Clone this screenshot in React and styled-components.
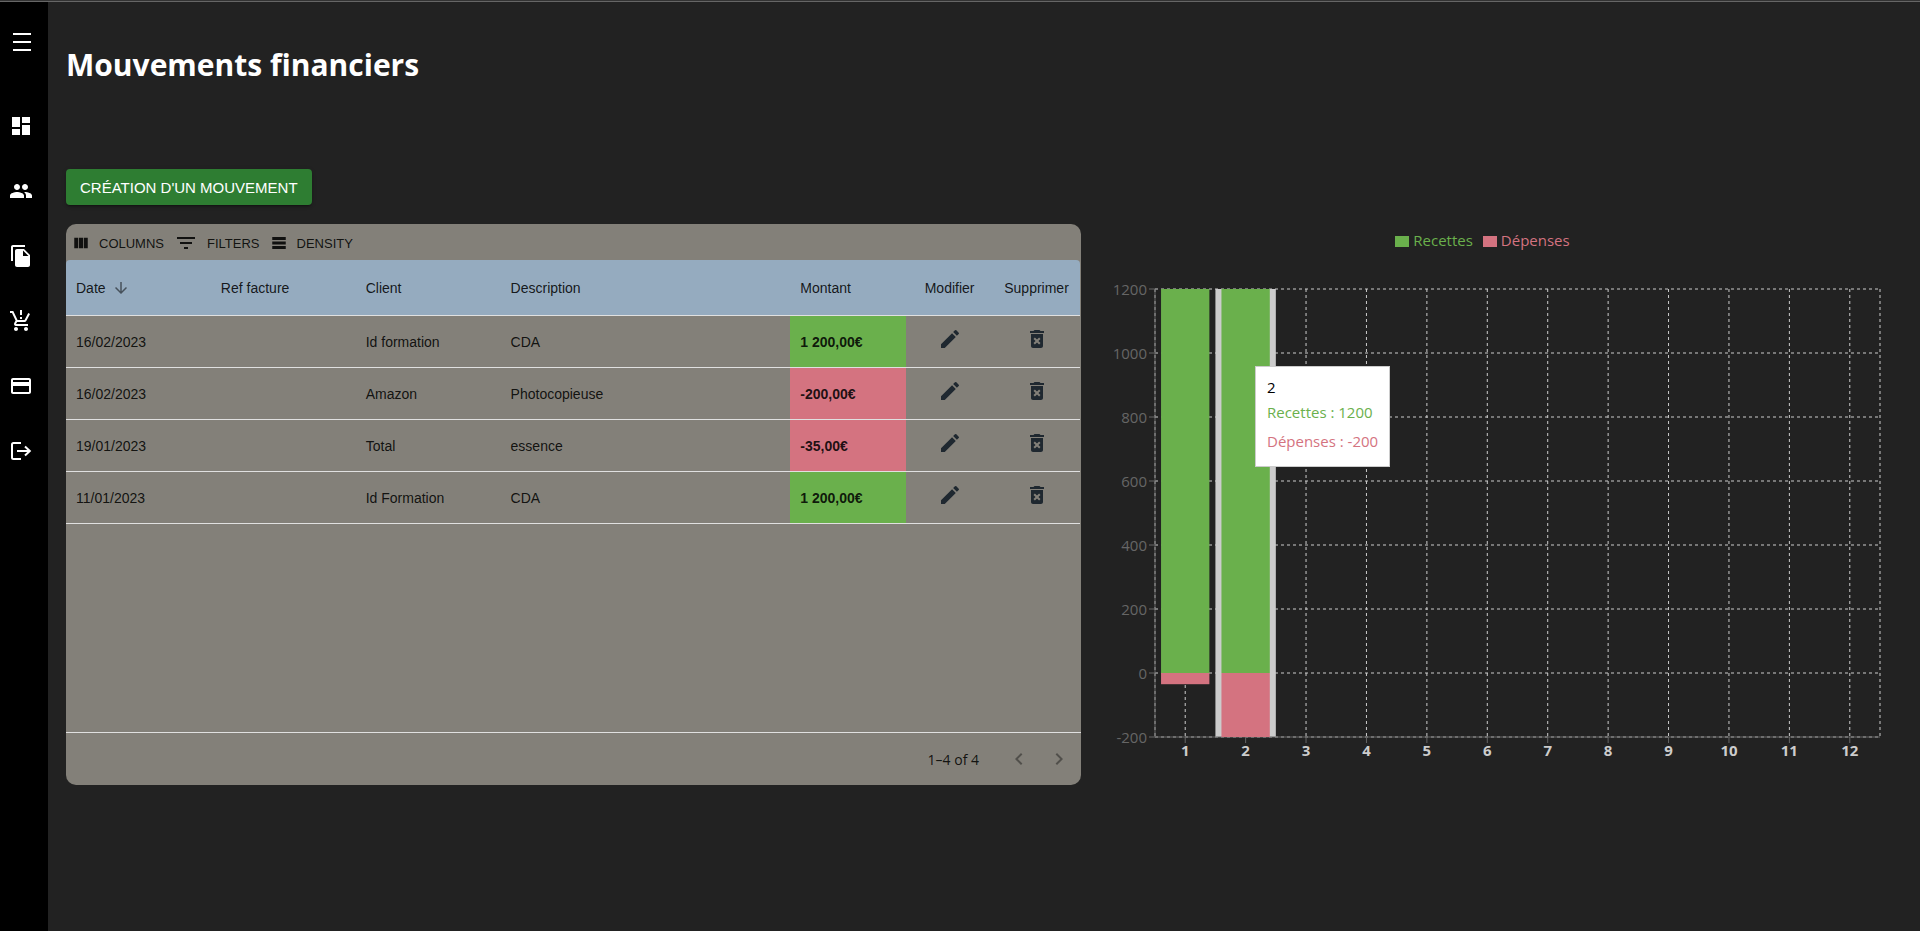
import React from "react";
import styled, { createGlobalStyle } from "styled-components";
import {
  MdDashboard,
  MdPeople,
  MdFileCopy,
  MdProductionQuantityLimits,
  MdPayment,
  MdEdit,
  MdDeleteForever,
  MdArrowDownward,
  MdKeyboardArrowLeft,
  MdKeyboardArrowRight,
  MdFilterList,
} from "react-icons/md";

const GREEN = "#6ab04c";
const RED = "#d47380";
const SANS = `"Liberation Sans", Arial, sans-serif`;
const HUMANIST = `"Open Sans", "Noto Sans", sans-serif`;

const GlobalStyle = createGlobalStyle`
  *, *::before, *::after { box-sizing: border-box; }
  body { margin: 0; background: #222; font-family: ${HUMANIST}; }
  button { font-family: inherit; border: 0; background: none; padding: 0; cursor: pointer; }
`;

const TopRule = styled.div`
  height: 2px;
  background: #333;
  border-bottom: 1px solid #666;
`;

const Page = styled.div`
  display: flex;
  min-height: calc(100vh - 2px);
`;

const Sidebar = styled.nav`
  flex: none;
  width: 48px;
  padding: 20px 0 0 9px;
  background: #000;
  color: #fff;
`;

const MenuButton = styled.button`
  display: block;
  height: 40px;
  color: inherit;
  svg { display: block; margin-left: 1px; }
`;

const NavList = styled.ul`
  display: flex;
  flex-direction: column;
  gap: 1px;
  list-style: none;
  margin: 32px 0 0;
  padding: 0;
`;

const NavLink = styled.a`
  display: flex;
  align-items: center;
  height: 64px;
  color: #fff;
`;

const Main = styled.main`
  flex: 1;
  min-width: 0;
  padding: 41px 40px 40px 18px;
`;

const Title = styled.h1`
  margin: 0 0 82px;
  font-size: 30px;
  line-height: 44px;
  font-weight: 700;
  color: #fff;
`;

const CreateButton = styled.button`
  display: block;
  height: 36px;
  padding: 0 14px;
  border-radius: 4px;
  background: #2e7d32;
  color: #fff;
  font-family: ${SANS};
  font-size: 15px;
  box-shadow: 0 3px 1px -2px rgba(0, 0, 0, 0.2), 0 2px 2px rgba(0, 0, 0, 0.14), 0 1px 5px rgba(0, 0, 0, 0.12);
`;

const Panels = styled.div`
  display: grid;
  grid-template-columns: 1015fr 795fr;
  align-items: start;
  gap: 4px;
  margin-top: 19px;
`;

const Card = styled.section`
  display: flex;
  flex-direction: column;
  min-height: 561px;
  border-radius: 10px;
  background: #838079;
  color: rgba(0, 0, 0, 0.87);
  font-family: ${SANS};
  font-size: 14px;
`;

const Toolbar = styled.div`
  display: flex;
  align-items: center;
  gap: 10px;
  height: 36px;
  padding: 2px 6px 0;
`;

const ToolButton = styled.button`
  display: flex;
  align-items: center;
  gap: 9px;
  font-size: 13px;
  color: rgba(0, 0, 0, 0.87);
`;

const Table = styled.table`
  width: 100%;
  padding-right: 1px;
  table-layout: fixed;
  border-collapse: separate;
  border-spacing: 0;
`;

const Col = styled.col`
  width: ${(p) => p.$width};
`;

const HeadCell = styled.th`
  height: 56px;
  padding: 0 10px;
  border-bottom: 1px solid #e0e0e0;
  background: #95abbf;
  font-weight: 400;
  text-align: ${(p) => (p.$center ? "center" : "left")};
  &:first-child { border-top-left-radius: 4px; }
  &:last-child { border-top-right-radius: 4px; }
`;

const SortLabel = styled.span`
  display: flex;
  align-items: center;
  gap: 6px;
  svg { opacity: 0.6; }
`;

const Cell = styled.td`
  height: 52px;
  padding: 0 10px;
  border-bottom: 1px solid #e0e0e0;
`;

const AmountCell = styled(Cell)`
  background: ${(p) => (p.$negative ? RED : GREEN)};
  font-weight: 700;
`;

const ActionCell = styled(Cell)`
  padding: 0 0 6px;
`;

const IconButton = styled.button`
  display: block;
  margin: 0 auto;
  color: #1f2830;
  svg { display: block; }
`;

const Footer = styled.footer`
  display: flex;
  align-items: center;
  justify-content: flex-end;
  gap: 16px;
  height: 53px;
  margin-top: auto;
  padding-right: 10px;
  border-top: 1px solid #e0e0e0;
  font-family: ${HUMANIST};
`;

const PageButton = styled.button`
  color: rgba(0, 0, 0, 0.38);
  svg { display: block; }
`;

const PageNav = styled.div`
  display: flex;
  gap: 16px;
  padding-left: 12px;
`;

const ChartPanel = styled.figure`
  position: relative;
  margin: 0;
  font-size: 15px;
`;

const Legend = styled.figcaption`
  display: flex;
  justify-content: center;
  gap: 10px;
  height: 65px;
  padding-top: 4px;
  line-height: 24px;
`;

const LegendItem = styled.span`
  display: flex;
  align-items: center;
  height: 24px;
  gap: 4px;
  color: ${(p) => p.$color};
  &::before {
    content: "";
    width: 14px;
    height: 11px;
    margin-top: 2px;
    background: ${(p) => p.$color};
  }
`;

const Plot = styled.svg`
  display: block;
  width: 100%;
  overflow: visible;
  font-family: ${HUMANIST};
  font-size: 15px;
`;

const Tooltip = styled.div`
  position: absolute;
  top: 142px;
  left: 170px;
  padding: 10px 11px;
  border: 1px solid #ccc;
  background: #fff;
  white-space: nowrap;
  color: #000;
  line-height: 21px;
`;

const TooltipRow = styled.p`
  margin: 0;
  padding: ${(p) => (p.$color ? "4px 0" : "0")};
  color: ${(p) => p.$color || "#000"};
`;

const ExitIcon = () => (
  <svg width="24" height="24" viewBox="0 0 24 24" fill="none" stroke="currentColor" strokeWidth="2">
    <path d="M12 4H4.500Q3 4 3 5.500V18.500Q3 20 4.500 20H12" />
    <path d="M8 12H20.500M16 7.500L20.800 12L16 16.500" />
  </svg>
);

const NAV = [
  ["Tableau de bord", MdDashboard],
  ["Clients", MdPeople],
  ["Documents", MdFileCopy],
  ["Achats", MdProductionQuantityLimits],
  ["Paiements", MdPayment],
  ["Déconnexion", ExitIcon],
];

const COLUMNS = ["14.286%", "14.286%", "14.286%", "28.571%", "11.429%", "8.571%", "8.571%"];

const ROWS = [
  { date: "16/02/2023", client: "Id formation", description: "CDA", amount: "1 200,00€" },
  { date: "16/02/2023", client: "Amazon", description: "Photocopieuse", amount: "-200,00€" },
  { date: "19/01/2023", client: "Total", description: "essence", amount: "-35,00€" },
  { date: "11/01/2023", client: "Id Formation", description: "CDA", amount: "1 200,00€" },
];

const MONTHS = [
  { income: 1200, expense: -35 },
  { income: 1200, expense: -200 },
  ...Array.from({ length: 10 }, () => ({ income: 0, expense: 0 })),
];
const TICKS = [1200, 1000, 800, 600, 400, 200, 0, -200];
const LEFT = 70;
const WIDTH = 725;
const HEIGHT = 448;
const BAND = WIDTH / MONTHS.length;
const y = (v) => ((1200 - v) * HEIGHT) / 1400;

function Chart() {
  return (
    <Plot viewBox="0 0 795 480" role="img" aria-label="Recettes et dépenses par mois">
      <g stroke="#ccc" strokeDasharray="3 3">
        {TICKS.map((t) => (
          <line key={t} x1={LEFT} x2={LEFT + WIDTH} y1={y(t)} y2={y(t)} />
        ))}
        {MONTHS.map((_, i) => (
          <line key={i} x1={LEFT + BAND * (i + 0.5)} x2={LEFT + BAND * (i + 0.5)} y1={0} y2={HEIGHT} />
        ))}
        <line x1={LEFT} x2={LEFT} y1={0} y2={HEIGHT} />
        <line x1={LEFT + WIDTH} x2={LEFT + WIDTH} y1={0} y2={HEIGHT} />
      </g>
      <rect x={LEFT + BAND} y={0} width={BAND} height={HEIGHT} fill="#ccc" />
      <g stroke="#666">
        <line x1={LEFT} x2={LEFT} y1={0} y2={HEIGHT} />
        <line x1={LEFT} x2={LEFT + WIDTH} y1={HEIGHT} y2={HEIGHT} />
        {TICKS.map((t) => (
          <line key={t} x1={LEFT - 6} x2={LEFT} y1={y(t)} y2={y(t)} />
        ))}
        {MONTHS.map((_, i) => (
          <line key={i} x1={LEFT + BAND * (i + 0.5)} x2={LEFT + BAND * (i + 0.5)} y1={HEIGHT} y2={HEIGHT + 6} />
        ))}
      </g>
      {MONTHS.map((m, i) => (
        <g key={i}>
          <rect x={LEFT + BAND * (i + 0.1)} y={y(m.income)} width={BAND * 0.8} height={y(0) - y(m.income)} fill={GREEN} />
          <rect x={LEFT + BAND * (i + 0.1)} y={y(0)} width={BAND * 0.8} height={y(m.expense) - y(0)} fill={RED} />
        </g>
      ))}
      <g fill="#666" textAnchor="end">
        {TICKS.map((t) => (
          <text key={t} x={LEFT - 8} y={y(t) + 6}>{t}</text>
        ))}
      </g>
      <g fill="#ccc" fontWeight="700" textAnchor="middle">
        {MONTHS.map((_, i) => (
          <text key={i} x={LEFT + BAND * (i + 0.5)} y={HEIGHT + 19}>{i + 1}</text>
        ))}
      </g>
    </Plot>
  );
}

export default function App() {
  return (
    <>
      <GlobalStyle />
      <TopRule />
      <Page>
        <Sidebar aria-label="Navigation">
          <MenuButton type="button" aria-label="Menu">
            <svg width="24" height="24" viewBox="0 0 24 24" fill="currentColor">
              <path d="M3 3h18v2H3zM3 11h18v2H3zM3 19h18v2H3z" />
            </svg>
          </MenuButton>
          <NavList>
            {NAV.map(([label, Icon]) => (
              <li key={label}>
                <NavLink href="#" aria-label={label}>
                  <Icon size={24} />
                </NavLink>
              </li>
            ))}
          </NavList>
        </Sidebar>
        <Main>
          <Title>Mouvements financiers</Title>
          <CreateButton type="button">CRÉATION D'UN MOUVEMENT</CreateButton>
          <Panels>
            <Card>
              <Toolbar>
                <ToolButton type="button">
                  <svg width="18" height="18" viewBox="0 0 24 24" fill="currentColor">
                    <path d="M14.670 5v14H9.330V5h5.340zM15.670 19H21V5h-5.330v14zM8.330 19V5H3v14h5.330z" />
                  </svg>
                  COLUMNS
                </ToolButton>
                <ToolButton type="button">
                  <MdFilterList size={24} />
                  FILTERS
                </ToolButton>
                <ToolButton type="button">
                  <svg width="18" height="18" viewBox="0 0 24 24" fill="currentColor">
                    <path d="M21 8H3V4h18v4zm0 2H3v4h18v-4zm0 6H3v4h18v-4z" />
                  </svg>
                  DENSITY
                </ToolButton>
              </Toolbar>
              <Table>
                <colgroup>
                  {COLUMNS.map((w, i) => (
                    <Col key={i} $width={w} />
                  ))}
                </colgroup>
                <thead>
                  <tr>
                    <HeadCell aria-sort="descending">
                      <SortLabel>
                        Date <MdArrowDownward size={18} />
                      </SortLabel>
                    </HeadCell>
                    <HeadCell>Ref facture</HeadCell>
                    <HeadCell>Client</HeadCell>
                    <HeadCell>Description</HeadCell>
                    <HeadCell>Montant</HeadCell>
                    <HeadCell $center>Modifier</HeadCell>
                    <HeadCell $center>Supprimer</HeadCell>
                  </tr>
                </thead>
                <tbody>
                  {ROWS.map((r, i) => (
                    <tr key={i}>
                      <Cell>{r.date}</Cell>
                      <Cell />
                      <Cell>{r.client}</Cell>
                      <Cell>{r.description}</Cell>
                      <AmountCell $negative={r.amount.startsWith("-")}>{r.amount}</AmountCell>
                      <ActionCell>
                        <IconButton type="button" aria-label="Modifier">
                          <MdEdit size={24} />
                        </IconButton>
                      </ActionCell>
                      <ActionCell>
                        <IconButton type="button" aria-label="Supprimer">
                          <MdDeleteForever size={24} />
                        </IconButton>
                      </ActionCell>
                    </tr>
                  ))}
                </tbody>
              </Table>
              <Footer>
                <span>1–4 of 4</span>
                <PageNav>
                  <PageButton type="button" aria-label="Page précédente">
                    <MdKeyboardArrowLeft size={24} />
                  </PageButton>
                  <PageButton type="button" aria-label="Page suivante">
                    <MdKeyboardArrowRight size={24} />
                  </PageButton>
                </PageNav>
              </Footer>
            </Card>
            <ChartPanel>
              <Legend>
                <LegendItem $color={GREEN}>Recettes</LegendItem>
                <LegendItem $color={RED}>Dépenses</LegendItem>
              </Legend>
              <Chart />
              <Tooltip role="tooltip">
                <TooltipRow>2</TooltipRow>
                <TooltipRow $color={GREEN}>Recettes : 1200</TooltipRow>
                <TooltipRow $color={RED}>Dépenses : -200</TooltipRow>
              </Tooltip>
            </ChartPanel>
          </Panels>
        </Main>
      </Page>
    </>
  );
}
